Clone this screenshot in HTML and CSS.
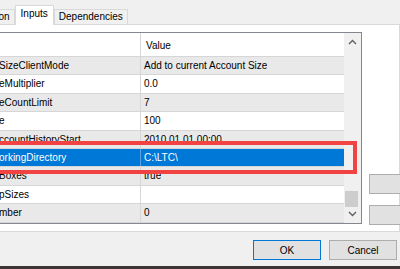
FILE: index.html
```html
<!DOCTYPE html>
<html lang="en">
<head>
    <meta charset="UTF-8">
    <title>Expert Properties</title>
    <link rel="stylesheet" href="styles.css">
</head>
<body>

    <div class="dialog">
        <div class="tabs">
            <div class="tab">Common</div>
            <div class="tab active">Inputs</div>
            <div class="tab">Dependencies</div>
        </div>

        <div class="page">
            <div class="grid">
                <div class="grid-body">
                    <div class="row head">
                        <div class="cell name"></div>
                        <div class="cell value">Value</div>
                    </div>
                    <div class="row odd">
                        <div class="cell name">SizeClientMode</div>
                        <div class="cell value">Add to current Account Size</div>
                    </div>
                    <div class="row">
                        <div class="cell name">eMultiplier</div>
                        <div class="cell value">0.0</div>
                    </div>
                    <div class="row odd">
                        <div class="cell name">eCountLimit</div>
                        <div class="cell value">7</div>
                    </div>
                    <div class="row">
                        <div class="cell name">e</div>
                        <div class="cell value">100</div>
                    </div>
                    <div class="row odd">
                        <div class="cell name">ccountHistoryStart</div>
                        <div class="cell value">2010.01.01 00:00</div>
                    </div>
                    <div class="row selected">
                        <div class="cell name">orkingDirectory</div>
                        <div class="cell value">C:\LTC\</div>
                    </div>
                    <div class="row odd">
                        <div class="cell name">Boxes</div>
                        <div class="cell value">true</div>
                    </div>
                    <div class="row">
                        <div class="cell name">pSizes</div>
                        <div class="cell value"></div>
                    </div>
                    <div class="row odd">
                        <div class="cell name">mber</div>
                        <div class="cell value">0</div>
                    </div>
                </div>

                <div class="scrollbar">
                    <div class="sb-btn">
                        <svg width="9" height="6" viewBox="0 0 9 6"><path d="M1 5 L4.5 1.5 L8 5" fill="none" stroke="#606060" stroke-width="1.4"/></svg>
                    </div>
                    <div class="sb-track"><div class="sb-thumb"></div></div>
                    <div class="sb-btn">
                        <svg width="9" height="6" viewBox="0 0 9 6"><path d="M1 1 L4.5 4.5 L8 1" fill="none" stroke="#606060" stroke-width="1.4"/></svg>
                    </div>
                </div>

                <!-- red marker drawn over the selected row -->
                <div class="highlight"></div>
            </div>

            <div class="side">
                <button class="side-btn"></button>
                <button class="side-btn"></button>
            </div>
        </div>

        <div class="footer">
            <button class="btn default">OK</button>
            <button class="btn">Cancel</button>
        </div>
    </div>

</body>
</html>
```

FILE: styles.css
```css
body {
    margin: 0;
    width: 400px;
    height: 269px;
    overflow: hidden;
    background: #3d3436;
    font-family: "Liberation Sans", Arial, sans-serif;
    font-size: 10px;
    color: #000;
}
.dialog {
    margin-left: -38px;
    width: 438px;
    height: 266px;
    background: #f0f0f0;
    display: flex;
    flex-direction: column;
}
.tabs {
    height: 24px;
    display: flex;
    align-items: flex-end;
    padding-left: 2px;
    flex-shrink: 0;
}
.tab {
    height: 15px;
    box-sizing: border-box;
    padding: 1px 4px 0;
    border: 1px solid #d9d9d9;
    border-bottom: none;
    line-height: 12px;
    background: #f0f0f0;
    white-space: nowrap;
}
.tab.active {
    height: 20px;
    padding: 2px 5px 0;
    background: #fff;
    margin-bottom: -1px;
    position: relative;
    z-index: 1;
}
.page {
    height: 208px;
    box-sizing: border-box;
    margin-left: 2px;
    background: #fff;
    border: 1px solid #d9d9d9;
    display: flex;
    align-items: flex-start;
    flex-shrink: 0;
}
.grid {
    position: relative;
    display: flex;
    margin: 7px 0 0 30px;
    border: 1px solid #828790;
    flex-shrink: 0;
}
.grid-body {
    width: 348px;
}
.row {
    display: flex;
    height: 18.4px;
    box-sizing: border-box;
    border-bottom: 1px solid #d6d6d6;
    line-height: 17px;
    background: #fff;
}
.row.head {
    height: 24px;
    line-height: 25px;
}
.row.odd {
    background: #e9e9e9;
}
.row.selected {
    background: #0078d7;
    color: #fff;
}
.cell {
    white-space: nowrap;
    overflow: hidden;
}
.cell.name {
    width: 145px;
    flex-shrink: 0;
    box-sizing: border-box;
    padding-left: 3px;
    border-right: 1px solid #d6d6d6;
}
.selected .cell.name {
    border-right-color: #5ba3e0;
}
.cell.value {
    padding-left: 3px;
}
.head .cell.value {
    padding-left: 5px;
}
.scrollbar {
    width: 17px;
    background: #f0f0f0;
    display: flex;
    flex-direction: column;
}
.sb-btn {
    height: 17px;
    display: flex;
    align-items: center;
    justify-content: center;
}
.sb-track {
    flex: 1;
    display: flex;
    flex-direction: column;
    justify-content: flex-end;
}
.sb-thumb {
    height: 16px;
    margin: 0 3px -1px 1px;
    background: #cdcdcd;
}
.highlight {
    position: absolute;
    left: -8px;
    top: 108px;
    width: 369px;
    height: 33px;
    box-sizing: border-box;
    border: 4px solid #f24343;
}
.side {
    display: flex;
    flex-direction: column;
    gap: 11px;
    margin-left: 7px;
    padding-top: 149px;
    flex-shrink: 0;
}
.side-btn {
    width: 70px;
    height: 20px;
    padding: 0;
    background: #e1e1e1;
    border: 1px solid #adadad;
}
.footer {
    height: 34px;
    box-sizing: border-box;
    display: flex;
    justify-content: flex-end;
    gap: 8px;
    padding: 8px 3px 0 0;
}
.btn {
    width: 68px;
    height: 20px;
    padding: 0;
    font: inherit;
    color: #000;
    background: #e1e1e1;
    border: 1px solid #adadad;
}
.btn.default {
    border-color: #0078d7;
}
```
